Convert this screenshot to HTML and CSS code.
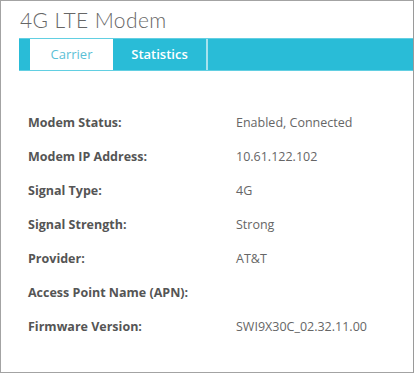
FILE: index.html
```html
<!DOCTYPE html>
<html lang="en">
<head>
    <meta charset="UTF-8">
    <meta name="viewport" content="width=device-width, initial-scale=1.0">
    <title>4G LTE Modem</title>
    <link rel="stylesheet" href="styles.css">
</head>
<body>
    <div class="panel">
        <h1 class="title">4G LTE Modem</h1>
        <div class="tabs">
            <div class="tab active">Carrier</div>
            <div class="tab">Statistics</div>
        </div>
        <div class="details">
            <div class="row">
                <div class="label">Modem Status:</div>
                <div class="value">Enabled, Connected</div>
            </div>
            <div class="row">
                <div class="label">Modem IP Address:</div>
                <div class="value">10.61.122.102</div>
            </div>
            <div class="row">
                <div class="label">Signal Type:</div>
                <div class="value">4G</div>
            </div>
            <div class="row">
                <div class="label">Signal Strength:</div>
                <div class="value">Strong</div>
            </div>
            <div class="row">
                <div class="label">Provider:</div>
                <div class="value">AT&amp;T</div>
            </div>
            <div class="row">
                <div class="label">Access Point Name (APN):</div>
                <div class="value"></div>
            </div>
            <div class="row">
                <div class="label">Firmware Version:</div>
                <div class="value">SWI9X30C_02.32.11.00</div>
            </div>
        </div>
    </div>
</body>
</html>
```

FILE: styles.css
```css
body {
    margin: 0;
    background: white;
    font-family: "Open Sans", Arial, sans-serif;
}
.panel {
    box-sizing: border-box;
    width: 414px;
    height: 373px;
    border: 1px solid #a3a3a3;
    border-right-color: #9a9a9a;
}
.title {
    margin: 0;
    padding: 6px 0 0 19px;
    height: 31px;
    box-sizing: border-box;
    font-family: Lato, "Open Sans", sans-serif;
    font-weight: 300;
    font-size: 21px;
    letter-spacing: 0.4px;
    line-height: 26px;
    color: #666;
}
.tabs {
    display: flex;
    margin: 6px 0 0 18px;
    height: 33px;
    box-sizing: border-box;
    padding-left: 11px;
    background: #29bcd7;
    border-top: 1px solid #62cfe2;
    border-bottom: 1px solid #62cfe2;
}
.tab {
    width: 95px;
    box-sizing: border-box;
    text-align: center;
    font-size: 13px;
    line-height: 31px;
    color: white;
    font-weight: 600;
    border-right: 2px solid #a6e2ee;
}
.tab.active {
    width: 83px;
    background: white;
    color: #5bbfd6;
    font-weight: 400;
    border-right: none;
}
.details {
    padding: 34px 0 0 27px;
}
.row {
    display: flex;
    height: 34px;
    align-items: center;
    font-size: 12.5px;
    color: #555;
}
.label {
    width: 208px;
    font-weight: 700;
}
.value {
    color: #666;
}
```
